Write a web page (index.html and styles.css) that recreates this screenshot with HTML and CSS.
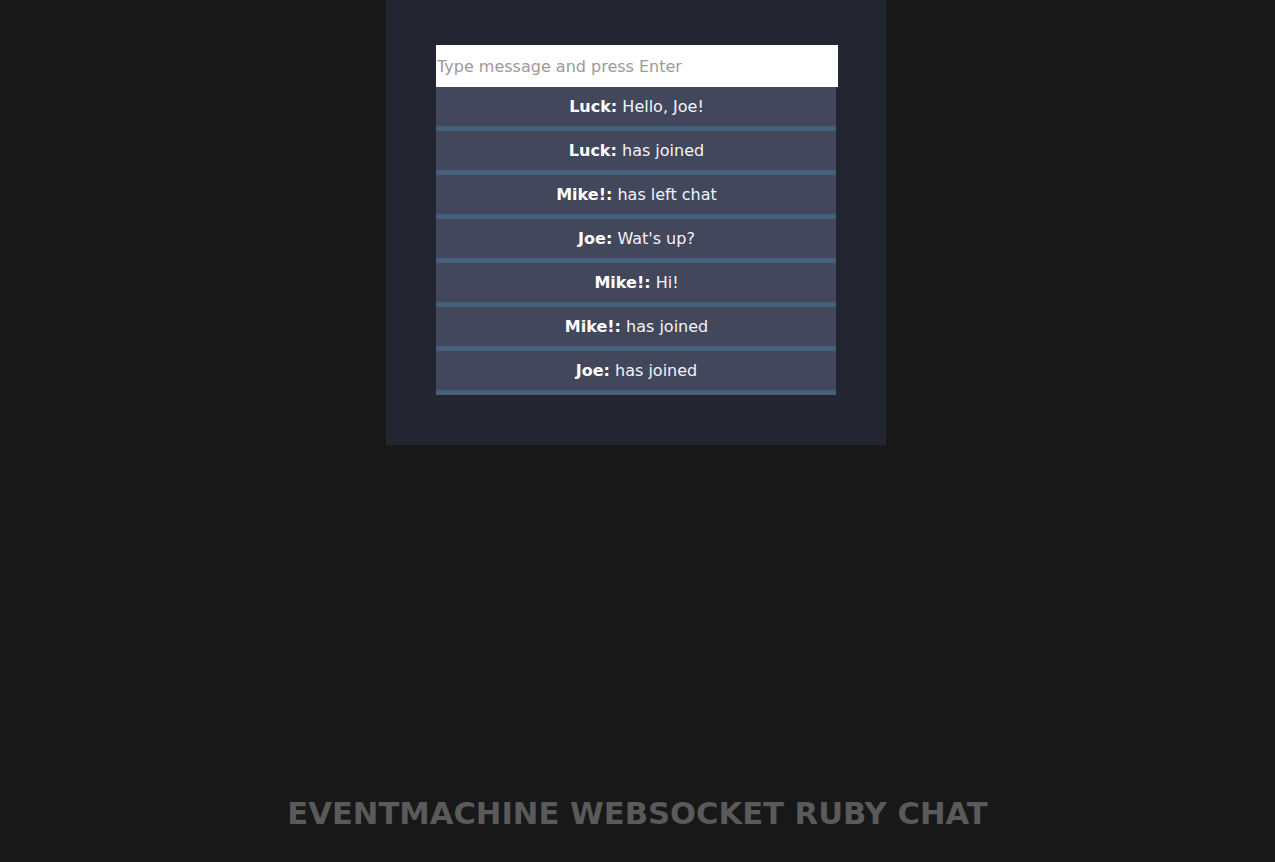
FILE: index.html
```html
<!DOCTYPE html>
<html>
<head>
<meta charset="utf-8">
<link rel="stylesheet" href="styles.css">
</head>
<body>
<main class="page">
  <section class="chat">
    <input class="msg-input" type="text" placeholder="Type message and press Enter">
    <ul class="messages">
      <li class="msg"><b>Luck:</b> Hello, Joe!</li>
      <li class="msg"><b>Luck:</b> has joined</li>
      <li class="msg"><b>Mike!:</b> has left chat</li>
      <li class="msg"><b>Joe:</b> Wat's up?</li>
      <li class="msg"><b>Mike!:</b> Hi!</li>
      <li class="msg"><b>Mike!:</b> has joined</li>
      <li class="msg"><b>Joe:</b> has joined</li>
    </ul>
  </section>
  <footer class="footer">
    <h1 class="title">EVENTMACHINE WEBSOCKET RUBY CHAT</h1>
  </footer>
</main>
</body>
</html>
```
FILE: styles.css
```css
html, body {
  margin: 0;
  padding: 0;
  background: #181818;
  font-family: "DejaVu Sans", sans-serif;
}
.page {
  height: 862px;
  display: flex;
  flex-direction: column;
  align-items: center;
}
.chat {
  width: 400px;
  padding: 45px 50px 50px;
  margin-right: 3px;
  background: #232530;
}
.msg-input {
  display: block;
  box-sizing: border-box;
  width: 402px;
  height: 42px;
  margin: 0;
  padding: 0;
  border: 1px solid #fff;
  background: #fff;
  font-family: "DejaVu Sans", sans-serif;
  font-size: 16px;
  color: #333;
  outline: none;
}
.msg-input::placeholder {
  color: #9a9a9a;
}
.messages {
  list-style: none;
  margin: 0;
  padding: 0;
}
.msg {
  background: #43475b;
  border-bottom: 5px solid #44607b;
  padding: 10px 0 10px 1px;
  line-height: 19px;
  font-size: 16px;
  color: #f0f4fa;
  text-align: center;
}
.msg b {
  color: #fff;
}
.footer {
  margin-top: auto;
  padding-bottom: 30px;
}
.title {
  margin: 0;
  font-size: 30.6px;
  font-weight: bold;
  line-height: 36px;
  color: #5a5a5a;
  text-align: center;
}
```
